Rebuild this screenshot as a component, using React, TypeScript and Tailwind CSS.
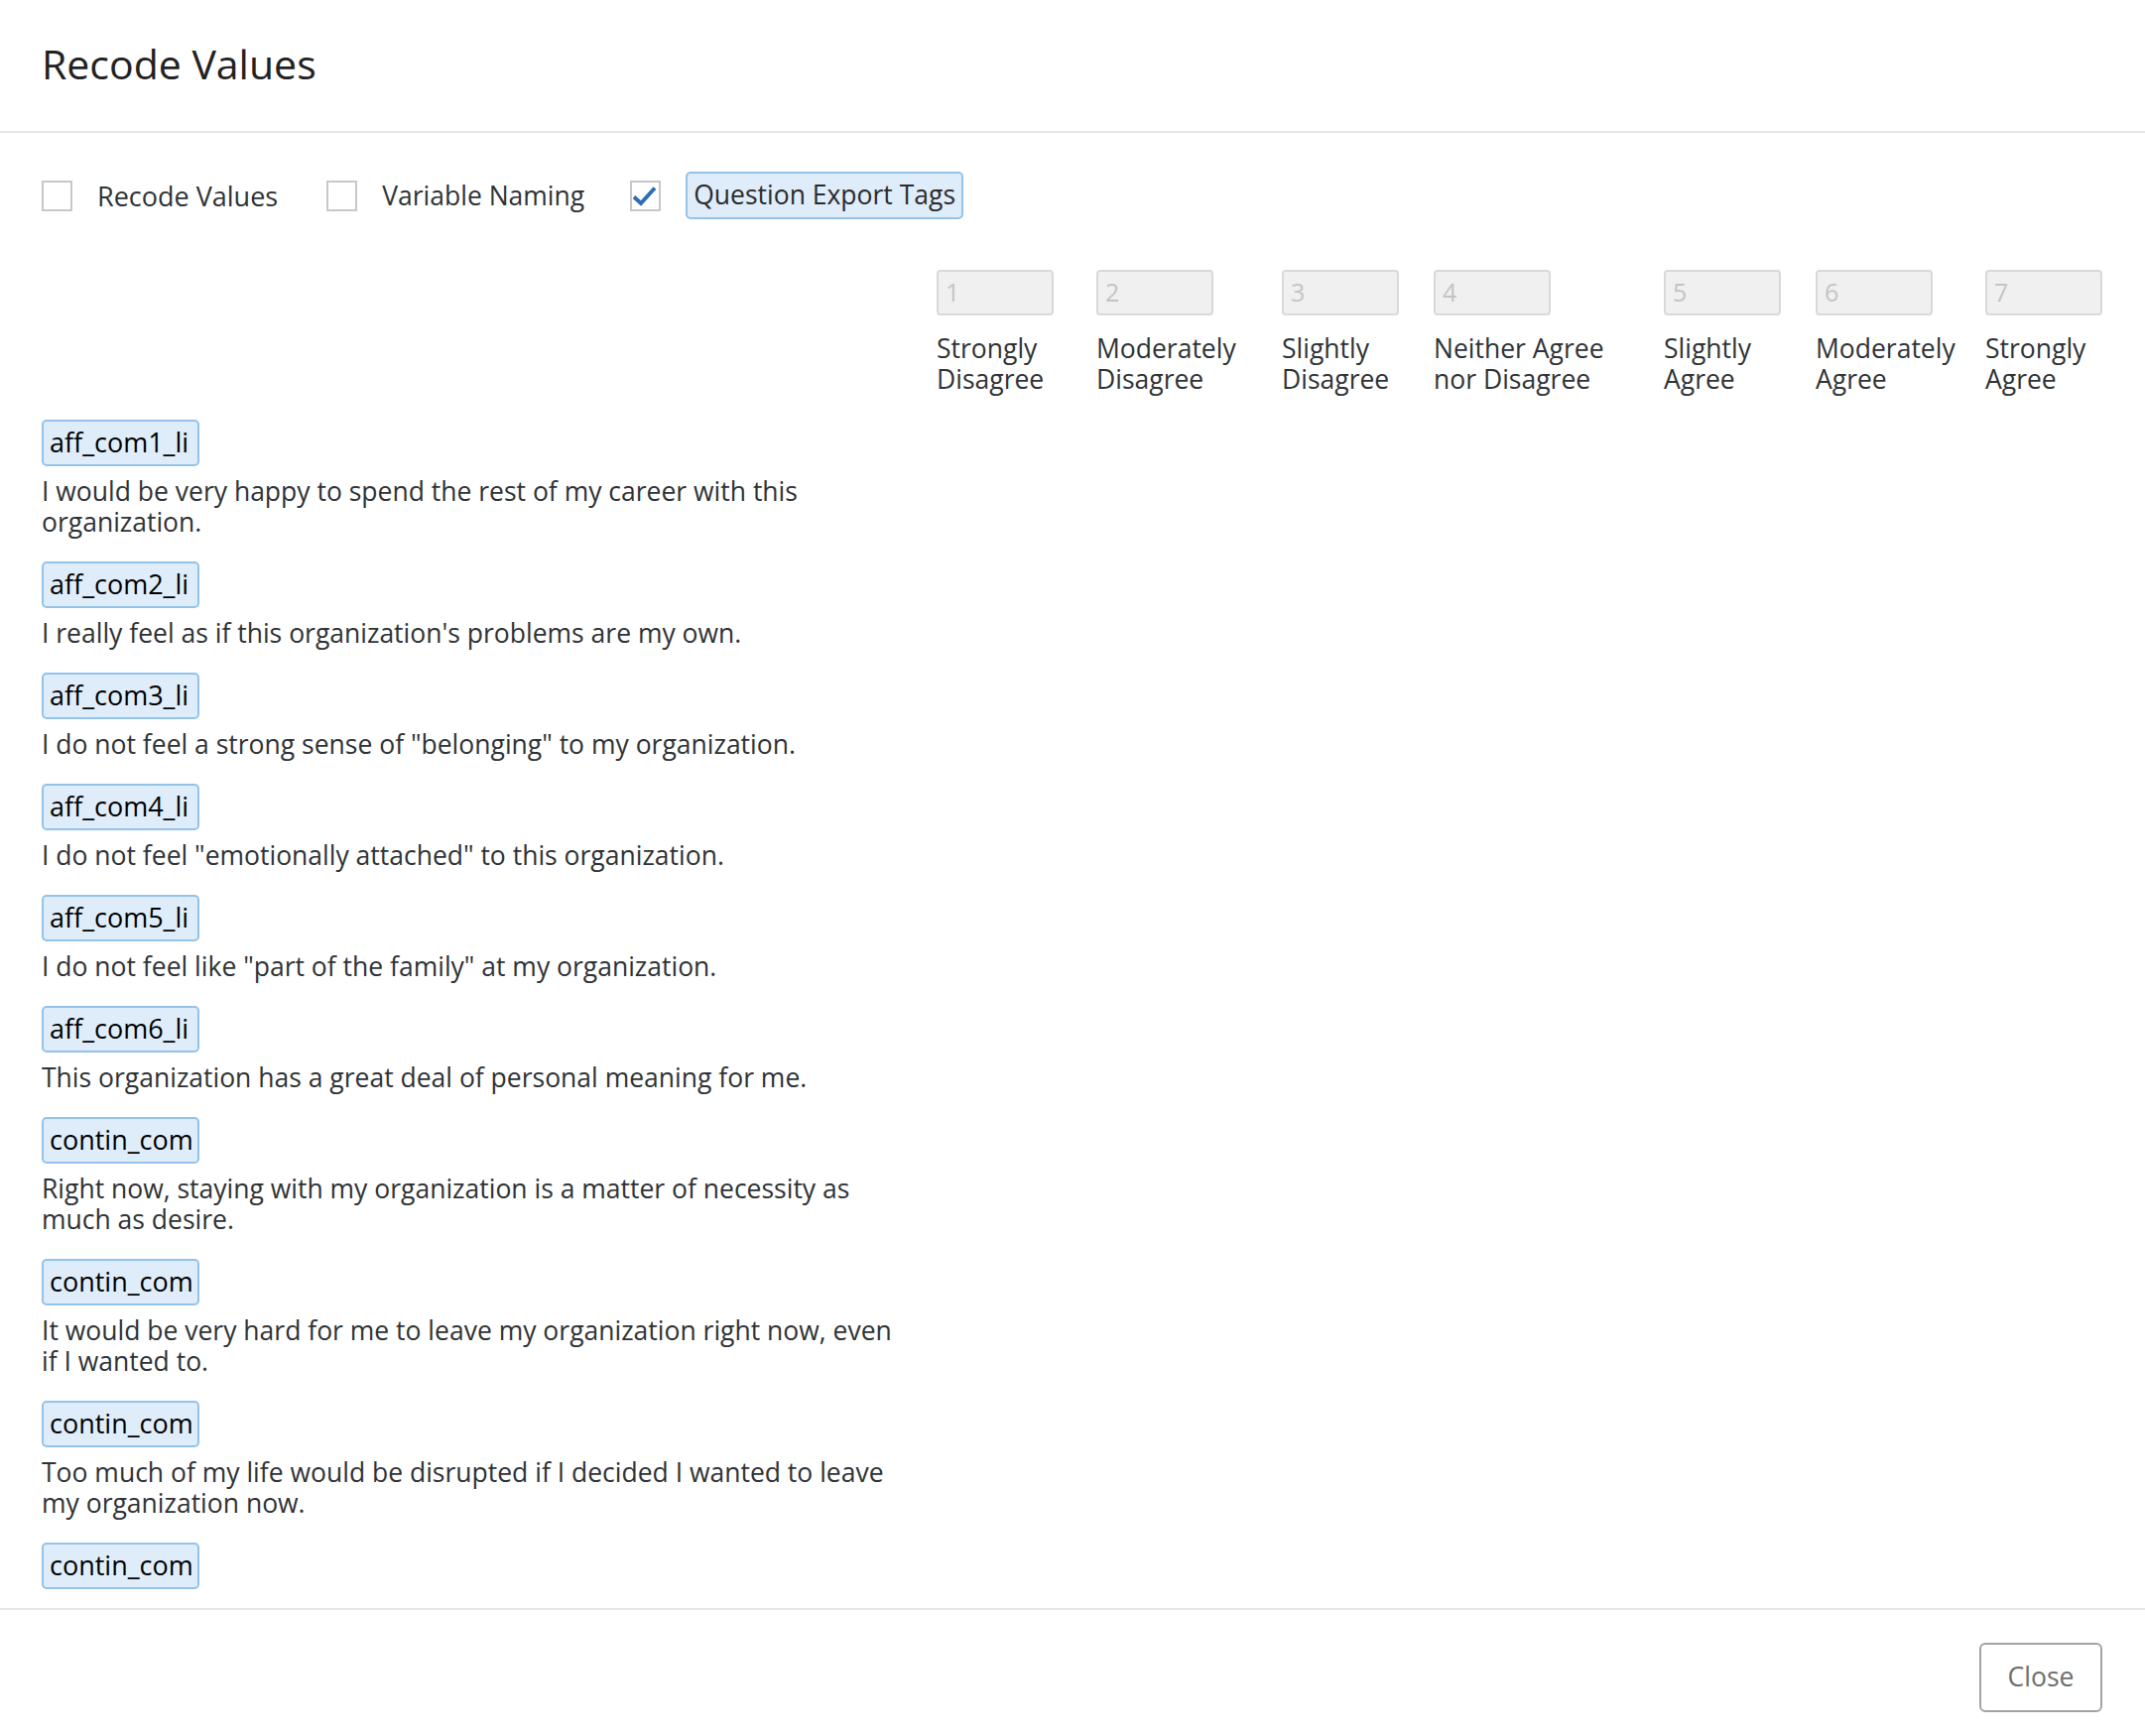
import React from 'react';

const scale = [
  { n: '1', top: 'Strongly', bottom: 'Disagree', w: 'w-[161px]' },
  { n: '2', top: 'Moderately', bottom: 'Disagree', w: 'w-[187px]' },
  { n: '3', top: 'Slightly', bottom: 'Disagree', w: 'w-[153px]' },
  { n: '4', top: 'Neither Agree', bottom: 'nor Disagree', w: 'w-[232px]' },
  { n: '5', top: 'Slightly', bottom: 'Agree', w: 'w-[153px]' },
  { n: '6', top: 'Moderately', bottom: 'Agree', w: 'w-[171px]' },
  { n: '7', top: 'Strongly', bottom: 'Agree', w: 'w-[118px]' },
];

const questions = [
  { tag: 'aff_com1_li', text: 'I would be very happy to spend the rest of my career with this organization.' },
  { tag: 'aff_com2_li', text: "I really feel as if this organization's problems are my own." },
  { tag: 'aff_com3_li', text: 'I do not feel a strong sense of "belonging" to my organization.' },
  { tag: 'aff_com4_li', text: 'I do not feel "emotionally attached" to this organization.' },
  { tag: 'aff_com5_li', text: 'I do not feel like "part of the family" at my organization.' },
  { tag: 'aff_com6_li', text: 'This organization has a great deal of personal meaning for me.' },
  { tag: 'contin_com1_li', text: 'Right now, staying with my organization is a matter of necessity as much as desire.' },
  { tag: 'contin_com2_li', text: 'It would be very hard for me to leave my organization right now, even if I wanted to.' },
  { tag: 'contin_com3_li', text: 'Too much of my life would be disrupted if I decided I wanted to leave my organization now.' },
  { tag: 'contin_com4_li', text: '' },
];

function Checkbox({ checked }: { checked?: boolean }) {
  return (
    <div className="h-[31px] w-[31px] shrink-0 border-2 border-[#c8c8c8] bg-white">
      {checked && (
        <svg viewBox="0 0 27 27" className="h-full w-full">
          <path d="M2 14.5 L9 21 L23 5.5" fill="none" stroke="#2f6db5" strokeWidth="4" strokeLinejoin="miter" />
        </svg>
      )}
    </div>
  );
}

function Tag({ children, fixed }: { children: React.ReactNode; fixed?: boolean }) {
  if (fixed) {
    return (
      <div className="flex h-[47px] w-[159px] items-center rounded-[5px] border-2 border-[#93c3ea] bg-[#dfedfb] px-[6px] text-[27px] text-black">
        <span className="block overflow-hidden whitespace-nowrap">{children}</span>
      </div>
    );
  }
  return (
    <div className="flex h-[48px] items-center whitespace-nowrap rounded-[5px] border-2 border-[#93c3ea] bg-[#dfedfb] px-[6px] text-[#2b2b2b]">
      {children}
    </div>
  );
}

export default function App() {
  return (
    <div className="flex h-[1750px] w-[2162px] flex-col bg-white font-['Open_Sans',sans-serif] text-[26.5px] text-[#2f3336]">
      {/* Header */}
      <div className="flex h-[134px] shrink-0 items-center border-b-2 border-[#e6e6e6] px-[42px] pb-1">
        <h1 className="text-[41px] leading-none text-[#222]">Recode Values</h1>
      </div>

      {/* Body */}
      <div className="min-h-0 flex-1 overflow-hidden px-[42px] pt-[39px]">
        <div className="flex items-center">
          <Checkbox />
          <span className="ml-[25px] mr-[49px] text-[27px] leading-none">Recode Values</span>
          <Checkbox />
          <span className="ml-[25px] mr-[46px] text-[26.5px] leading-none">Variable Naming</span>
          <Checkbox checked />
          <div className="ml-[25px]">
            <Tag>Question Export Tags</Tag>
          </div>
        </div>

        {/* Scale header */}
        <div className="mt-[51px] flex">
          <div className="w-[902px] shrink-0" />
          {scale.map((s) => (
            <div key={s.n} className={`${s.w} shrink-0`}>
              <div className="flex h-[46px] w-[118px] items-center rounded-[4px] border-2 border-[#d9d9d9] bg-[#f0f0f0] pl-[7px] text-[25px] text-[#c4c4c4]">
                {s.n}
              </div>
              <div className="mt-[18px] whitespace-nowrap leading-[31px]">
                <div>{s.top}</div>
                <div>{s.bottom}</div>
              </div>
            </div>
          ))}
        </div>

        {/* Questions */}
        <div className="mt-[25px] flex w-[870px] flex-col gap-[24px]">
          {questions.map((q, i) => (
            <div key={i} className="flex flex-col items-start gap-[10px]">
              <Tag fixed>{q.tag}</Tag>
              {q.text && <p className="leading-[31px]">{q.text}</p>}
            </div>
          ))}
        </div>
      </div>

      {/* Footer */}
      <div className="flex h-[129px] shrink-0 justify-end border-t-2 border-[#e6e6e6] pr-[43px] pt-[33px]">
        <button className="h-[70px] w-[124px] rounded-[6px] border-2 border-[#a3a3a3] bg-white text-[26.5px] text-[#6e6e6e]">
          Close
        </button>
      </div>
    </div>
  );
}
